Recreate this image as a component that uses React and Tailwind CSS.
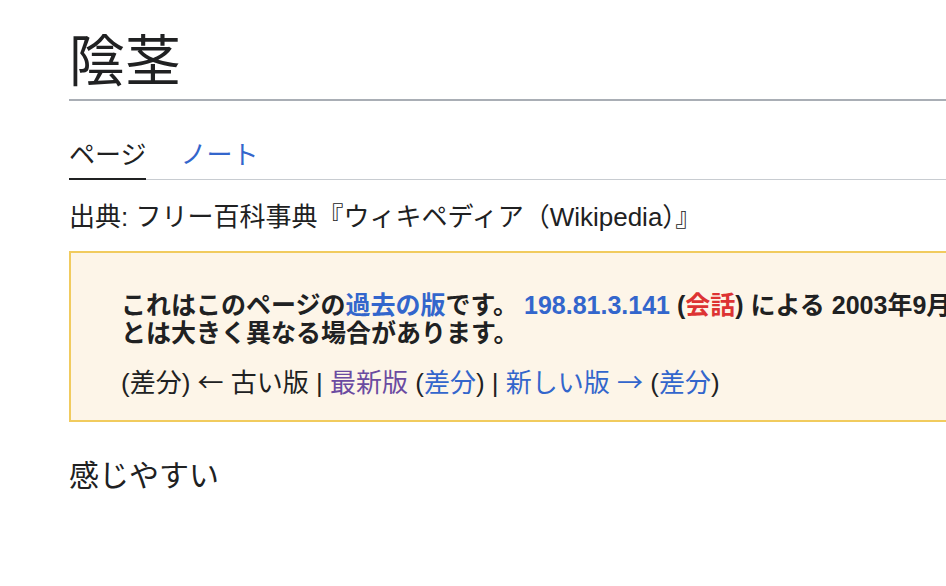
export default function App() {
  const font = { fontFamily: "'Liberation Sans', 'Noto Sans CJK JP', sans-serif" };
  const cjk = { fontFamily: "'Noto Sans CJK JP', sans-serif" };
  return (
    <div className="w-[946px] h-[586px] overflow-hidden bg-white text-[#202122]" style={font}>
      <div className="w-[1300px] pl-[69px] pt-[34px]">
        {/* Title */}
        <h1 className="text-[56px] leading-none pb-[9px] border-b-2 border-[#a9aeb5] font-normal">
          陰茎
        </h1>

        {/* Tabs */}
        <div className="mt-[41px] flex gap-[34px] border-b border-[#c8ccd1] text-[26px] leading-[26px]">
          <div className="-mb-px pb-[10px] border-b-2 border-[#202122]">ページ</div>
          <div className="pb-[11px] text-[#3366cc]">ノート</div>
        </div>

        {/* Site sub */}
        <div className="mt-[24px] text-[26px] leading-[26px]">
          出典: フリー百科事典『ウィキペディア（Wikipedia）』
        </div>

        {/* Revision box */}
        <div className="mt-[21px] bg-[#fdf5e8] border-2 border-[#f1cb5e] pl-[50px] pt-[38px] pb-[23px]">
          <div className="font-bold text-[25px] leading-[28px] whitespace-nowrap">
            これはこのページの<span className="text-[#3366cc]">過去の版</span>です。
            <span className="ml-[6px] text-[#3366cc]">198.81.3.141</span> (<span className="text-[#d33]">会話</span>) による 2003年9月14日 (日) 14:40 (個人設定で未設定ならUTC)時点の版であり、現在の版
            <br />
            とは大きく異なる場合があります。
          </div>
          <div className="mt-[20px] text-[26px] leading-[28px] whitespace-nowrap">
            (差分) <span style={cjk}>←</span> 古い版 | <span className="text-[#6b4ba1]">最新版</span> (<span className="text-[#3366cc]">差分</span>) | <span className="text-[#3366cc]">新しい版 <span style={cjk}>→</span></span> (<span className="text-[#3366cc]">差分</span>)
          </div>
        </div>

        {/* Body */}
        <p className="mt-[36px] text-[30px] leading-[36px]">感じやすい</p>
      </div>
    </div>
  );
}
